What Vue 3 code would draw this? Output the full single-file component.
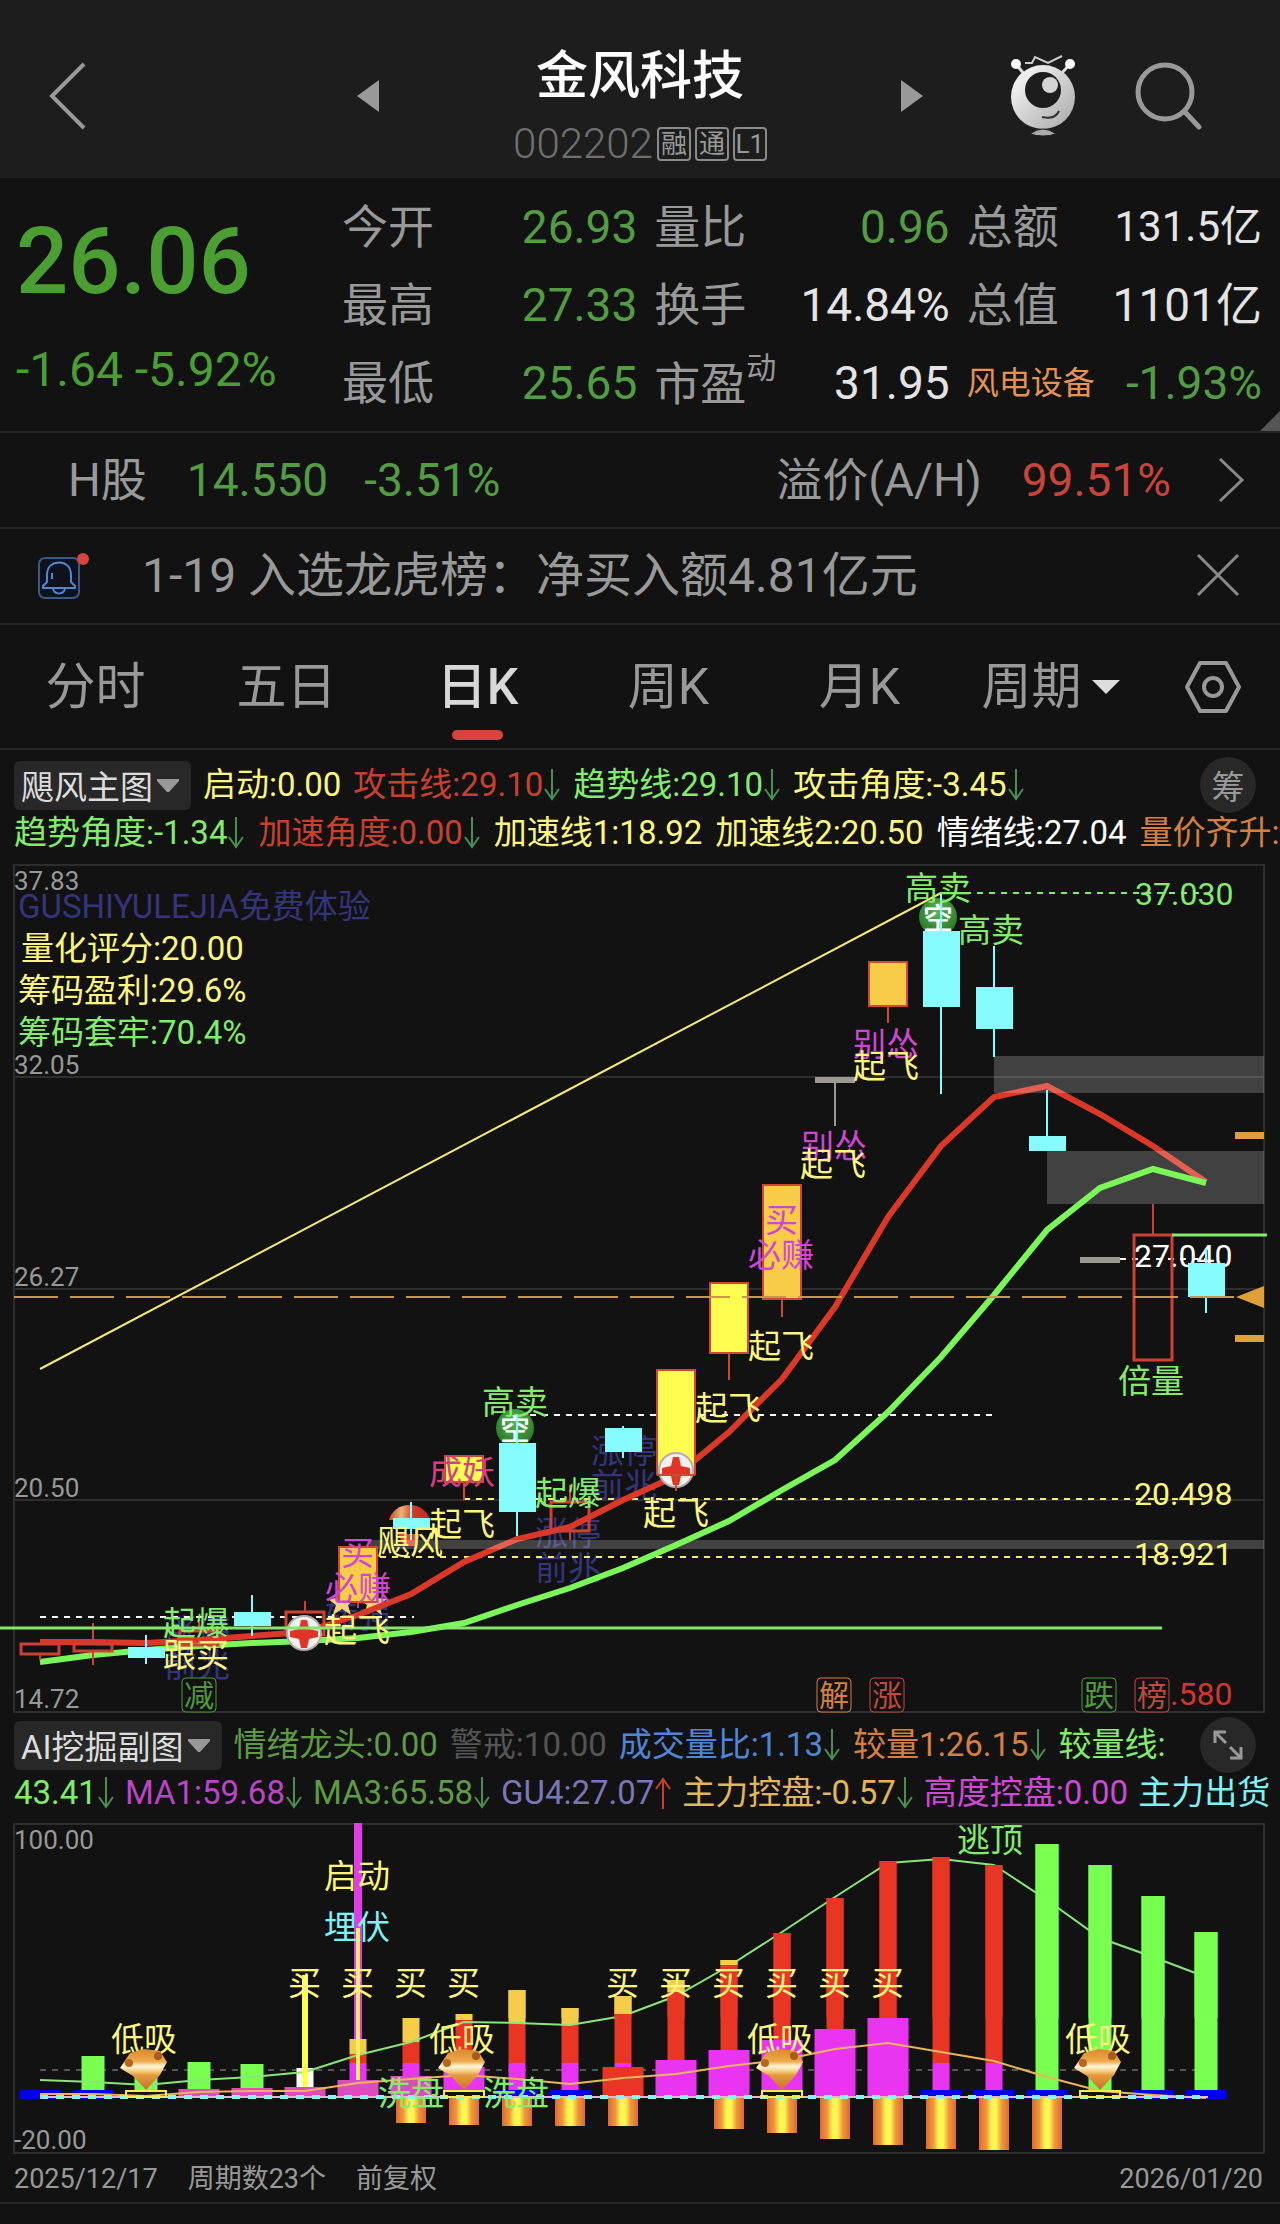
<script setup>
const quotes = [
  { label: '今开', value: '26.93', tone: 'down' },
  { label: '量比', value: '0.96', tone: 'down' },
  { label: '总额', value: '131.5亿', tone: 'plain', small: true },
  { label: '最高', value: '27.33', tone: 'down' },
  { label: '换手', value: '14.84%', tone: 'plain' },
  { label: '总值', value: '1101亿', tone: 'plain' },
  { label: '最低', value: '25.65', tone: 'down' },
  { label: '市盈', sup: '动', value: '31.95', tone: 'plain' },
  { label: '风电设备', sector: true, value: '-1.93%', tone: 'down' },
]
const tabs = ['分时', '五日', '日K', '周K', '月K']

const yellow = '#fdf67e'
const lime = '#84ec6c'
const navy = '#34357c'
const pink = '#d046d4'
const red = '#c9402f'

const mainRow1 = [
  { t: '启动:0.00', c: yellow },
  { t: '攻击线:29.10', c: red, a: 'down' },
  { t: '趋势线:29.10', c: lime, a: 'down' },
  { t: '攻击角度:-3.45', c: yellow, a: 'down' },
]
const mainRow2 = [
  { t: '趋势角度:-1.34', c: lime, a: 'down' },
  { t: '加速角度:0.00', c: red, a: 'down' },
  { t: '加速线1:18.92', c: yellow },
  { t: '加速线2:20.50', c: yellow },
  { t: '情绪线:27.04', c: '#ffffff' },
  { t: '量价齐升:', c: '#d5803f' },
]
const subRow1 = [
  { t: '情绪龙头:0.00', c: '#5f9a45' },
  { t: '警戒:10.00', c: '#555555' },
  { t: '成交量比:1.13', c: '#4f86d6', a: 'down' },
  { t: '较量1:26.15', c: '#d5803f', a: 'down' },
  { t: '较量线:', c: lime },
]
const subRow2 = [
  { t: '43.41', c: lime, a: 'down' },
  { t: 'MA1:59.68', c: '#bb45c6', a: 'down' },
  { t: 'MA3:65.58', c: '#5f9a45', a: 'down' },
  { t: 'GU4:27.07', c: '#7a77b8', a: 'up' },
  { t: '主力控盘:-0.57', c: '#e2b65a', a: 'down' },
  { t: '高度控盘:0.00', c: '#cf48d6' },
  { t: '主力出货', c: '#7df3f7' },
]

const barX = (i) => 40 + i * 53

// i: period, k: kind, t/b: body top and bottom, h/l: wick top and bottom
const candles = [
  { i: 0, k: 'hollow', t: 1644, b: 1654, h: 1643, l: 1660 },
  { i: 1, k: 'hollow', t: 1644, b: 1651, h: 1623, l: 1665 },
  { i: 2, k: 'cyan', t: 1647, b: 1658, h: 1635, l: 1664 },
  { i: 3, k: 'hollow', t: 1631, b: 1645, h: 1618, l: 1645 },
  { i: 4, k: 'cyan', t: 1612, b: 1626, h: 1595, l: 1636 },
  { i: 5, k: 'hollow', t: 1612, b: 1635, h: 1601, l: 1635 },
  { i: 6, k: 'orange', t: 1547, b: 1602, h: 1547, l: 1608 },
  { i: 7, k: 'cyan', t: 1518, b: 1529, h: 1502, l: 1540 },
  { i: 8, k: 'yellow', t: 1456, b: 1482, h: 1456, l: 1500 },
  { i: 9, k: 'cyan', t: 1443, b: 1512, h: 1414, l: 1536 },
  { i: 10, k: 'hollow', t: 1502, b: 1531, h: 1485, l: 1540 },
  { i: 11, k: 'cyan', t: 1428, b: 1452, h: 1426, l: 1458 },
  { i: 12, k: 'yellow', t: 1370, b: 1474, h: 1370, l: 1491 },
  { i: 13, k: 'yellow', t: 1283, b: 1353, h: 1283, l: 1380 },
  { i: 14, k: 'orange', t: 1185, b: 1299, h: 1185, l: 1317 },
  { i: 15, k: 'flat', t: 1078, b: 1082, h: 1082, l: 1126 },
  { i: 16, k: 'orange', t: 962, b: 1006, h: 962, l: 1023 },
  { i: 17, k: 'cyan', t: 931, b: 1007, h: 893, l: 1094 },
  { i: 18, k: 'cyan', t: 987, b: 1029, h: 946, l: 1057 },
  { i: 19, k: 'cyan', t: 1136, b: 1151, h: 1090, l: 1151 },
  { i: 20, k: 'flat', t: 1258, b: 1262, h: 1258, l: 1262 },
  { i: 21, k: 'hollow', t: 1235, b: 1360, h: 1204, l: 1235 },
  { i: 22, k: 'cyan', t: 1263, b: 1297, h: 1248, l: 1313 },
]
const toPoints = (ys) => ys.map((y, i) => `${barX(i)},${y}`).join(' ')
const attackLine = toPoints([1642, 1642, 1643, 1640, 1636, 1632, 1615, 1594, 1562, 1539, 1527, 1500, 1476, 1432, 1379, 1307, 1217, 1146, 1097, 1086, 1114, 1146, 1182])
const trendLine = toPoints([1662, 1655, 1650, 1646, 1643, 1641, 1638, 1632, 1623, 1605, 1588, 1568, 1545, 1521, 1490, 1460, 1412, 1357, 1295, 1230, 1188, 1169, 1183])

const axis = [
  { t: '37.83', y: 890 },
  { t: '32.05', y: 1074 },
  { t: '26.27', y: 1286 },
  { t: '20.50', y: 1497 },
  { t: '14.72', y: 1708 },
]
const backLabels = [
  { t: 'GUSHIYULEJIA免费体验', x: 18, y: 918, c: navy },
  { t: '量化评分:20.00', x: 21, y: 960, c: yellow },
  { t: '筹码盈利:29.6%', x: 18, y: 1002, c: yellow },
  { t: '筹码套牢:70.4%', x: 18, y: 1044, c: lime },
  { t: '涨停', x: 164, y: 1643, c: navy },
  { t: '前兆', x: 164, y: 1677, c: navy },
  { t: '转强', x: 325, y: 1628, c: navy },
  { t: '涨停', x: 535, y: 1545, c: navy },
  { t: '前兆', x: 535, y: 1580, c: navy },
  { t: '涨停', x: 591, y: 1463, c: navy },
  { t: '前兆', x: 591, y: 1497, c: navy },
  { t: '27.040', x: 1134, y: 1267, c: '#ffffff', num: true },
  { t: '37.030', x: 1135, y: 905, c: lime, num: true },
]
const frontLabels = [
  { t: '起爆', x: 163, y: 1635, c: lime },
  { t: '跟买', x: 163, y: 1667, c: yellow },
  { t: '必赚', x: 325, y: 1600, c: pink },
  { t: '买', x: 341, y: 1565, c: pink },
  { t: '起飞', x: 324, y: 1642, c: yellow },
  { t: '飓风', x: 377, y: 1554, c: yellow },
  { t: '起飞', x: 429, y: 1536, c: yellow },
  { t: '成妖', x: 429, y: 1484, c: '#d63f86' },
  { t: '高卖', x: 482, y: 1414, c: lime },
  { t: '起爆', x: 535, y: 1505, c: lime },
  { t: '起飞', x: 643, y: 1525, c: yellow },
  { t: '起飞', x: 695, y: 1420, c: yellow },
  { t: '起飞', x: 748, y: 1358, c: yellow },
  { t: '买', x: 765, y: 1232, c: pink },
  { t: '必赚', x: 748, y: 1267, c: pink },
  { t: '别怂', x: 801, y: 1158, c: pink },
  { t: '起飞', x: 800, y: 1176, c: yellow },
  { t: '别怂', x: 853, y: 1056, c: pink },
  { t: '起飞', x: 853, y: 1078, c: yellow },
  { t: '高卖', x: 905, y: 900, c: lime },
  { t: '高卖', x: 958, y: 942, c: lime },
  { t: '倍量', x: 1118, y: 1393, c: lime },
  { t: '20.498', x: 1134, y: 1505, c: yellow, num: true },
  { t: '18.921', x: 1134, y: 1565, c: yellow, num: true },
  { t: '.580', x: 1170, y: 1705, c: '#d0382c', num: true },
]
const eventTags = [
  { t: '减', x: 182, c: '#4f9a3c' },
  { t: '解', x: 817, c: '#d5803f' },
  { t: '涨', x: 870, c: '#c04a40' },
  { t: '跌', x: 1082, c: '#4f9a3c' },
  { t: '榜', x: 1135, c: '#c04a40' },
]
const plusBalls = [{ x: 304, y: 1633 }, { x: 676, y: 1470 }]
const shortBalls = [{ x: 515, y: 1428 }, { x: 938, y: 917 }]

const gold = '#f6cd4a'
const scarlet = '#e93624'
const magenta = '#e935f2'
const rose = '#dc4cc0'
const green = '#78ff4f'
const blue = '#0000ee'
// i: period, w: width, t/b: top and bottom, c: fill
const columns = [
  { i: 1, w: 23, t: 2056, b: 2090, c: green },
  { i: 2, w: 23, t: 2066, b: 2090, c: green },
  { i: 3, w: 23, t: 2062, b: 2090, c: green },
  { i: 4, w: 23, t: 2064, b: 2090, c: green },
  { i: 5, w: 17, t: 2068, b: 2088, c: '#ffffff' },
  { i: 6, w: 8, t: 1823, b: 2050, c: '#dd3ce6' },
  { i: 6, w: 17, t: 2039, b: 2054, c: gold },
  { i: 6, w: 17, t: 2054, b: 2063, c: scarlet },
  { i: 6, w: 17, t: 2063, b: 2082, c: magenta },
  { i: 7, w: 17, t: 2018, b: 2042, c: gold },
  { i: 7, w: 17, t: 2042, b: 2063, c: scarlet },
  { i: 7, w: 17, t: 2063, b: 2080, c: magenta },
  { i: 8, w: 17, t: 2014, b: 2020, c: gold },
  { i: 8, w: 17, t: 2020, b: 2070, c: scarlet },
  { i: 9, w: 17, t: 1990, b: 2023, c: gold },
  { i: 9, w: 17, t: 2023, b: 2063, c: scarlet },
  { i: 9, w: 17, t: 2063, b: 2090, c: magenta },
  { i: 10, w: 17, t: 2008, b: 2024, c: gold },
  { i: 10, w: 17, t: 2024, b: 2063, c: scarlet },
  { i: 10, w: 17, t: 2063, b: 2090, c: magenta },
  { i: 11, w: 17, t: 1996, b: 2014, c: gold },
  { i: 11, w: 17, t: 2014, b: 2063, c: scarlet },
  { i: 11, w: 17, t: 2063, b: 2068, c: magenta },
  { i: 12, w: 17, t: 1980, b: 1992, c: gold },
  { i: 12, w: 17, t: 1992, b: 2060, c: scarlet },
  { i: 13, w: 17, t: 1960, b: 1965, c: gold },
  { i: 13, w: 17, t: 1965, b: 2052, c: scarlet },
  { i: 14, w: 17, t: 1933, b: 2042, c: scarlet },
  { i: 15, w: 17, t: 1898, b: 2030, c: scarlet },
  { i: 16, w: 17, t: 1861, b: 2020, c: scarlet },
  { i: 17, w: 17, t: 1857, b: 2063, c: scarlet },
  { i: 17, w: 17, t: 2063, b: 2090, c: magenta },
  { i: 18, w: 17, t: 1865, b: 2063, c: scarlet },
  { i: 18, w: 17, t: 2063, b: 2090, c: magenta },
  { i: 19, w: 23, t: 1844, b: 2090, c: green },
  { i: 20, w: 23, t: 1865, b: 2090, c: green },
  { i: 21, w: 23, t: 1896, b: 2090, c: green },
  { i: 22, w: 23, t: 1932, b: 2090, c: green },
  { i: 3, w: 41, t: 2089, b: 2098, c: rose },
  { i: 4, w: 41, t: 2088, b: 2098, c: rose },
  { i: 5, w: 41, t: 2087, b: 2098, c: rose },
  { i: 6, w: 41, t: 2080, b: 2098, c: rose },
  { i: 7, w: 41, t: 2076, b: 2098, c: rose },
  { i: 8, w: 41, t: 2067, b: 2090, c: magenta },
  { i: 11, w: 41, t: 2067, b: 2098, c: scarlet },
  { i: 12, w: 41, t: 2060, b: 2098, c: magenta },
  { i: 13, w: 41, t: 2050, b: 2098, c: magenta },
  { i: 14, w: 41, t: 2040, b: 2090, c: magenta },
  { i: 15, w: 41, t: 2029, b: 2098, c: magenta },
  { i: 16, w: 41, t: 2018, b: 2098, c: magenta },
  ...[0, 1, 9, 10, 17, 18, 19, 21, 22].map((i) => ({ i, w: 41, t: 2090, b: 2099, c: blue })),
]
const tallColumns = columns.filter((c) => c.i > 8 && c.t < 2030)
const washBars = [
  { i: 7, b: 2123 }, { i: 8, b: 2125 }, { i: 9, b: 2126 }, { i: 10, b: 2126 }, { i: 11, b: 2126 },
  { i: 13, b: 2129 }, { i: 14, b: 2133 }, { i: 15, b: 2139 }, { i: 16, b: 2145 },
  { i: 17, b: 2149 }, { i: 18, b: 2150 }, { i: 19, b: 2149 },
]
const strengthLine = toPoints([2080, 2082, 2085, 2080, 2077, 2072, 2055, 2042, 2022, 2023, 2025, 2016, 1996, 1966, 1932, 1897, 1863, 1859, 1865, 1900, 1938, 1957, 1977])
const controlLine = toPoints([2094, 2094, 2096, 2092, 2091, 2091, 2083, 2079, 2075, 2079, 2084, 2078, 2074, 2066, 2060, 2049, 2043, 2052, 2061, 2077, 2091, 2095, 2098])
const buys = [5, 6, 7, 8, 11, 12, 13, 14, 15, 16]
const dips = [2, 8, 14, 20]
</script>

<template>
  <main class="page">
    <header class="top">
      <button class="icon-btn back" aria-label="返回">
        <svg width="40" height="70" viewBox="0 0 40 70"><path d="M36 3 L4 35 L36 67" fill="none" stroke="#999" stroke-width="4" /></svg>
      </button>
      <div class="switcher">
        <button class="icon-btn" aria-label="上一只">
          <svg width="24" height="34" viewBox="0 0 24 34"><path d="M23 1 V33 L1 17Z" fill="#999" /></svg>
        </button>
        <div class="title">
          <h1>金风科技</h1>
          <p><span class="code">002202</span><span class="tag">融</span><span class="tag">通</span><span class="tag">L1</span></p>
        </div>
        <button class="icon-btn" aria-label="下一只">
          <svg width="24" height="34" viewBox="0 0 24 34"><path d="M1 1 V33 L23 17Z" fill="#999" /></svg>
        </button>
      </div>
      <div class="tools">
        <button class="icon-btn" aria-label="助手">
          <svg width="66" height="84" viewBox="0 0 66 84">
            <defs>
              <linearGradient id="bot" x1="0" y1="0" x2="1" y2="1"><stop offset="0" stop-color="#fff" /><stop offset=".6" stop-color="#c9c9c9" /><stop offset="1" stop-color="#a8a8a8" /></linearGradient>
            </defs>
            <path d="M6 10 L14 20 M60 10 L51 20" stroke="#ddd" stroke-width="3" />
            <circle cx="6" cy="10" r="5" fill="#fff" /><circle cx="60" cy="10" r="5" fill="#fff" />
            <path d="M15 9 H22 L25 3 L38 9 L52 2" fill="none" stroke="#ccc" stroke-width="2" />
            <circle cx="33" cy="43" r="32" fill="url(#bot)" />
            <circle cx="33" cy="36" r="18" fill="#1d1d1d" />
            <circle cx="40" cy="31" r="8" fill="#d4d4d4" />
            <path d="M32 63 Q45 66 49 57" fill="none" stroke="#333" stroke-width="2" />
            <path d="M20 80 Q33 70 46 80 Q33 84 20 80Z" fill="#aaa" stroke="#1d1d1d" />
          </svg>
        </button>
        <button class="icon-btn" aria-label="搜索">
          <svg width="68" height="70" viewBox="0 0 68 70"><circle cx="30" cy="31" r="27" fill="none" stroke="#999" stroke-width="5" /><path d="M50 51 L64 66" stroke="#999" stroke-width="5" stroke-linecap="round" /></svg>
        </button>
      </div>
    </header>

    <section class="quote">
      <div class="price">
        <strong>26.06</strong>
        <span>-1.64 -5.92%</span>
      </div>
      <dl class="grid">
        <div v-for="q in quotes" :key="q.label" class="cell">
          <dt :class="{ sector: q.sector }">{{ q.label }}<sup v-if="q.sup">{{ q.sup }}</sup></dt>
          <dd :class="[q.tone, { small: q.small }]">{{ q.value }}</dd>
        </div>
      </dl>
      <i class="corner"></i>
    </section>

    <section class="hshare">
      <span>H股</span><b class="down h-price">14.550</b><b class="down">-3.51%</b>
      <span class="premium">溢价(A/H)</span><b class="up">99.51%</b>
      <svg class="more" width="28" height="46" viewBox="0 0 28 46"><path d="M3 2 L25 23 L3 44" fill="none" stroke="#888" stroke-width="3" /></svg>
    </section>

    <section class="notice">
      <svg width="56" height="50" viewBox="0 0 56 50">
        <rect x="3" y="8" width="40" height="40" rx="6" fill="#0c131c" stroke="#3c5a85" stroke-width="2" />
        <path d="M11 32 V25 C11 16 17 12.500 23 12.500 C29 12.500 35 16 35 25 V32 L39 36 V38 H7 V36Z M17 39 C19 45 27 45 29 39 M16 23 V29" fill="none" stroke="#5387cf" stroke-width="2" stroke-linejoin="round" />
        <circle cx="47" cy="9" r="6" fill="#d8453c" />
      </svg>
      <p>1-19 入选龙虎榜：净买入额4.81亿元</p>
      <button class="icon-btn" aria-label="关闭">
        <svg width="44" height="44" viewBox="0 0 44 44"><path d="M2 2 L42 42 M42 2 L2 42" stroke="#888" stroke-width="3" /></svg>
      </button>
    </section>

    <nav class="tabs">
      <button v-for="t in tabs" :key="t" :class="{ active: t === '日K' }">{{ t }}</button>
      <button class="period">周期<svg width="28" height="14" viewBox="0 0 28 14"><path d="M0 0 H28 L14 14Z" fill="#ddd" /></svg></button>
      <button class="settings" aria-label="设置">
        <svg width="58" height="54" viewBox="0 0 58 54"><path d="M16 3 H42 L55 27 L42 51 H16 L3 27Z" fill="none" stroke="#999" stroke-width="4" stroke-linejoin="round" /><circle cx="29" cy="27" r="9" fill="none" stroke="#999" stroke-width="4" /></svg>
      </button>
    </nav>

    <section class="indicator">
      <div class="row first">
        <button class="picker">飓风主图<svg width="22" height="13" viewBox="0 0 22 13"><path d="M0 0 H22 V2 L12 13 H10 L0 2Z" fill="#999" /></svg></button>
        <span v-for="m in mainRow1" :key="m.t" class="metric" :style="{ color: m.c }">{{ m.t }}<svg v-if="m.a" width="18" height="32" viewBox="0 0 18 32"><path d="M9 0 V30 M2 20 L9 30 L16 20" fill="none" stroke="#4a8f52" stroke-width="2" /></svg></span>
        <button class="round">筹</button>
      </div>
      <div class="row">
        <span v-for="m in mainRow2" :key="m.t" class="metric" :style="{ color: m.c }">{{ m.t }}<svg v-if="m.a" width="18" height="32" viewBox="0 0 18 32"><path d="M9 0 V30 M2 20 L9 30 L16 20" fill="none" stroke="#4a8f52" stroke-width="2" /></svg></span>
      </div>
    </section>

    <svg class="chart" viewBox="0 860 1280 858" role="img" aria-label="日K线主图">
      <defs>
        <radialGradient id="ball" cx=".5" cy=".35" r=".7"><stop offset="0" stop-color="#57b85a" /><stop offset="1" stop-color="#256e1f" /></radialGradient>
        <linearGradient id="fire" x1="0" y1="0" x2="1" y2="0"><stop offset="0" stop-color="#c4452c" /><stop offset=".3" stop-color="#f0b27a" /><stop offset=".6" stop-color="#cf3a28" /><stop offset="1" stop-color="#b8301f" /></linearGradient>
      </defs>
      <g class="frame">
        <rect x="14" y="865" width="1250" height="847" />
        <path d="M14 1077 H1264 M14 1289 H1264 M14 1500 H1264" />
      </g>
      <text v-for="a in axis" :key="a.t" class="axis" x="14" :y="a.y">{{ a.t }}</text>
      <text v-for="(l, n) in backLabels" :key="n" :class="['label', { num: l.num }]" :x="l.x" :y="l.y" :fill="l.c">{{ l.t }}</text>

      <path d="M40 1369 L941 893" stroke="#f4ec72" stroke-width="2" />
      <g stroke-width="2" stroke-dasharray="6 6">
        <path d="M40 1617 H414 M530 1415 H995 M1120 1259 H1206" stroke="#fff" />
        <path d="M464 1499 H1206 M380 1557 H1206" stroke="#f4ec72" />
        <path d="M965 893 H1206" stroke="#84ec6c" />
      </g>

      <path d="M389 1520 A21 19 0 0 1 430 1520Z" fill="url(#fire)" />
      <path d="M398 1534 H420 L416 1546 H404Z" fill="#e2452e" />
      <g v-for="(b, n) in shortBalls" :key="n">
        <circle :cx="b.x" :cy="b.y" r="19" fill="url(#ball)" />
        <text class="short" :x="b.x" :y="b.y + 12">空</text>
      </g>
      <path d="M342 1589 l4 9 10 1 -8 6 3 10 -9 -6 -9 6 3 -10 -8 -6 10 -1Z M373 1589 l4 9 10 1 -8 6 3 10 -9 -6 -9 6 3 -10 -8 -6 10 -1Z" fill="#f5d376" />

      <polyline :points="attackLine" fill="none" stroke="#dc3827" stroke-width="6" />
      <g fill="#fff" fill-opacity=".2">
        <rect x="994" y="1056" width="270" height="37" />
        <rect x="1047" y="1151" width="217" height="53" />
        <rect x="370" y="1540" width="894" height="9" />
      </g>
      <polyline :points="trendLine" fill="none" stroke="#7cf75a" stroke-width="6" />

      <g v-for="c in candles" :key="c.i" :class="['candle', c.k]">
        <path v-if="c.h < c.t" :d="`M${barX(c.i)} ${c.h} V${c.t}`" />
        <path v-if="c.l > c.b" :d="`M${barX(c.i)} ${c.b} V${c.l}`" />
        <rect :x="barX(c.i) - (c.k === 'cyan' ? 18 : 19)" :y="c.t" :width="c.k === 'cyan' ? 37 : 38" :height="c.b - c.t" />
      </g>
      <g v-for="(b, n) in plusBalls" :key="n">
        <circle :cx="b.x" :cy="b.y" r="17" fill="#f4f0ee" stroke="#b5aeac" stroke-width="2" />
        <path :d="`M${b.x - 3} ${b.y - 13} h6 l2 9 9 2 v6 l-9 2 -2 9 h-6 l-2 -9 -9 -2 v-6 l9 -2Z`" fill="#e03426" />
      </g>
      <path d="M657 1475 H695 M676 1475 V1491" stroke="#d2472f" stroke-width="2" />
      <path d="M0 1628 H1162" stroke="#86e66c" stroke-width="3" />
      <path d="M1172 1235 H1267" stroke="#84ec6c" stroke-width="3" />
      <path d="M14 1297 H1264" stroke="#c8964c" stroke-width="2" stroke-dasharray="44 12" />
      <g fill="#dfa03a">
        <rect x="1235" y="1132" width="29" height="7" />
        <rect x="1235" y="1335" width="29" height="7" />
        <path d="M1236 1297 L1264 1286 V1308Z" />
      </g>

      <text v-for="(l, n) in frontLabels" :key="n" :class="['label', { num: l.num }]" :x="l.x" :y="l.y" :fill="l.c">{{ l.t }}</text>
      <g v-for="e in eventTags" :key="e.t">
        <rect :x="e.x" y="1678" width="34" height="34" rx="4" fill="#121212" :stroke="e.c" />
        <text class="event" :x="e.x + 17" y="1706" :fill="e.c">{{ e.t }}</text>
      </g>
    </svg>

    <section class="indicator sub">
      <div class="row first">
        <button class="picker">AI挖掘副图<svg width="22" height="13" viewBox="0 0 22 13"><path d="M0 0 H22 V2 L12 13 H10 L0 2Z" fill="#999" /></svg></button>
        <span v-for="m in subRow1" :key="m.t" class="metric" :style="{ color: m.c }">{{ m.t }}<svg v-if="m.a" width="18" height="32" viewBox="0 0 18 32"><path d="M9 0 V30 M2 20 L9 30 L16 20" fill="none" stroke="#4a8f52" stroke-width="2" /></svg></span>
        <button class="round" aria-label="全屏">
          <svg width="32" height="32" viewBox="0 0 32 32"><path d="M14 14 L4 4 M3 14 V3 H14 M18 18 L28 28 M29 18 V29 H18" fill="none" stroke="#999" stroke-width="3" /></svg>
        </button>
      </div>
      <div class="row tight">
        <span v-for="m in subRow2" :key="m.t" class="metric" :style="{ color: m.c }">{{ m.t }}<svg v-if="m.a" width="18" height="32" viewBox="0 0 18 32"><path v-if="m.a === 'down'" d="M9 0 V30 M2 20 L9 30 L16 20" fill="none" stroke="#4a8f52" stroke-width="2" /><path v-else d="M9 32 V2 M2 12 L9 2 L16 12" fill="none" stroke="#c9402f" stroke-width="2" /></svg></span>
      </div>
    </section>

    <svg class="chart" viewBox="0 1820 1280 336" role="img" aria-label="AI挖掘副图">
      <defs>
        <linearGradient id="wash" x1="0" y1="0" x2="1" y2="0">
          <stop offset="0" stop-color="#dd6a30" /><stop offset=".25" stop-color="#ef9a3c" /><stop offset=".42" stop-color="#fdf650" />
          <stop offset=".58" stop-color="#fdf650" /><stop offset=".75" stop-color="#ef9a3c" /><stop offset="1" stop-color="#dd6a30" />
        </linearGradient>
        <linearGradient id="gem" x1="0" y1="0" x2="0" y2="1">
          <stop offset="0" stop-color="#d98a2b" /><stop offset=".3" stop-color="#eda94c" /><stop offset=".42" stop-color="#fff6d8" />
          <stop offset=".52" stop-color="#f8d893" /><stop offset=".64" stop-color="#e59a3c" /><stop offset="1" stop-color="#c8702a" />
        </linearGradient>
      </defs>
      <rect class="frame" x="14" y="1824" width="1250" height="329" />
      <text class="axis" x="14" y="1849">100.00</text>
      <text class="axis" x="14" y="2149">-20.00</text>
      <path d="M40 2070 H1206" stroke="#555" stroke-width="2" stroke-dasharray="6 6" />
      <rect v-for="(c, n) in columns" :key="n" :x="barX(c.i) - c.w / 2" :y="c.t" :width="c.w" :height="c.b - c.t" :fill="c.c" />
      <rect v-for="w in washBars" :key="w.i" :x="barX(w.i) - 15" y="2098" width="30" :height="w.b - 2098" fill="url(#wash)" />
      <polyline :points="strengthLine" fill="none" stroke="#8ae678" stroke-width="2" />
      <rect v-for="c in tallColumns" :key="`${c.i}-${c.t}`" :x="barX(c.i) - c.w / 2" :y="c.t" :width="c.w" :height="Math.min(c.b, 2018) - c.t" :fill="c.c" />
      <polyline :points="controlLine" fill="none" stroke="#eab55c" stroke-width="2" />
      <path d="M305 1975 V2087" stroke="#ffff50" stroke-width="6" />
      <path d="M358 1928 V2080" stroke="#ffef60" stroke-width="4" />
      <path d="M40 2097 H1208" stroke="#f0b4cc" stroke-width="2" />
      <path d="M40 2097 H1208" stroke="#86f6f8" stroke-width="4" stroke-dasharray="8 8" />
      <text class="label" x="324" y="1888" :fill="yellow">启动</text>
      <text class="label" x="324" y="1939" fill="#7df3f7">埋伏</text>
      <text class="label" x="957" y="1852" :fill="lime">逃顶</text>
      <text v-for="i in buys" :key="i" class="label" :x="barX(i) - 17" y="1995" :fill="yellow">买</text>
      <g v-for="i in dips" :key="i">
        <rect :x="barX(i) - 20" y="2091" width="40" height="6" fill="none" stroke="#f4ec50" stroke-width="2" />
        <text class="label" :x="barX(i) - 35" y="2051" :fill="yellow">低吸</text>
        <path :d="`M${barX(i) - 16} 2053 L${barX(i) - 2} 2049 L${barX(i) + 14} 2051 L${barX(i) + 21} 2062 L${barX(i) + 14} 2075 L${barX(i)} 2090 L${barX(i) - 13} 2076 L${barX(i) - 26} 2068Z`" fill="url(#gem)" />
        <circle :cx="barX(i) + 12" cy="2056" r="4" fill="#a65c1c" />
        <circle :cx="barX(i) - 17" cy="2063" r="4" fill="#b4661f" />
      </g>
      <text class="label" x="378" y="2105" :fill="lime">洗盘</text>
      <text class="label" x="483" y="2105" :fill="lime">洗盘</text>
    </svg>

    <footer class="foot">
      <span>2025/12/17</span><span>周期数23个</span><span>前复权</span><span class="end">2026/01/20</span>
    </footer>
  </main>
</template>

<style>
body {
  margin: 0;
  background: #121212;
}
</style>

<style scoped>
.page {
  min-height: 100vh;
  font-family: Roboto, "Noto Sans CJK SC", sans-serif;
  color: #999;
  background: #121212;
  overflow: hidden;
}
button {
  font: inherit;
  color: inherit;
  background: none;
  border: 0;
  padding: 0;
}
svg {
  display: block;
  flex: none;
}
h1, p, dl, dd {
  margin: 0;
}
b {
  font-weight: 400;
}
.down {
  color: #549c42;
}
.up {
  color: #cb4339;
}
.plain {
  color: #e4e4e4;
}

.top {
  display: grid;
  grid-template-columns: 1fr 568px 1fr;
  align-items: center;
  height: 164px;
  padding-top: 14px;
  background: #1d1d1d;
}
.back {
  margin-left: 48px;
  justify-self: start;
}
.switcher {
  display: flex;
  align-items: center;
  justify-content: space-between;
}
.title {
  padding-top: 22px;
  text-align: center;
}
.title h1 {
  font-size: 52px;
  line-height: 60px;
  font-weight: 500;
  color: #fff;
}
.title p {
  display: flex;
  align-items: center;
  gap: 4px;
  margin-top: 14px;
  line-height: 46px;
}
.code {
  font-size: 42px;
  font-weight: 300;
  color: #707070;
}
.tag {
  box-sizing: border-box;
  width: 34px;
  height: 34px;
  border: 2px solid #8a8a8a;
  border-radius: 4px;
  font-size: 26px;
  line-height: 30px;
  display: flex;
  justify-content: center;
}
.tools {
  display: flex;
  align-items: center;
  justify-content: flex-end;
  gap: 59px;
  padding-right: 77px;
}

.quote {
  position: relative;
  display: flex;
  box-sizing: border-box;
  height: 255px;
  padding: 10px 18px 0 16px;
  border-bottom: 2px solid #242424;
}
.price {
  flex: 0 0 326px;
  color: #4b9f32;
}
.price strong {
  display: block;
  margin-top: 24px;
  font-size: 92px;
  line-height: 100px;
  font-weight: 500;
}
.price span {
  display: block;
  margin-top: 28px;
  font-size: 48px;
  line-height: 60px;
}
.grid {
  flex: 1;
  display: grid;
  grid-template-columns: repeat(3, 1fr);
  grid-auto-rows: 78px;
  column-gap: 17px;
}
.cell {
  display: flex;
  justify-content: space-between;
  align-items: center;
  font-size: 46px;
  line-height: 60px;
  white-space: nowrap;
}
.cell sup {
  font-size: 30px;
  line-height: 30px;
  vertical-align: 22px;
}
.cell .sector {
  font-size: 32px;
  color: #e39450;
}
.small {
  font-size: 42px;
}
.corner {
  position: absolute;
  right: 0;
  bottom: 0;
  border-style: solid;
  border-width: 0 0 20px 20px;
  border-color: transparent transparent #555;
}

.hshare,
.notice {
  display: flex;
  align-items: center;
  box-sizing: border-box;
  height: 96px;
  border-bottom: 2px solid #242424;
  font-size: 46px;
  line-height: 60px;
}
.hshare {
  padding: 0 35px 0 68px;
}
.h-price {
  margin: 0 36px 0 40px;
}
.premium {
  margin: 0 40px 0 auto;
}
.more {
  margin-left: 46px;
}
.notice {
  padding: 0 40px 0 36px;
}
.notice svg {
  margin-bottom: 2px;
}
.notice p {
  margin-left: 50px;
  font-size: 48px;
}
.notice .icon-btn {
  margin-left: auto;
}

.tabs {
  display: flex;
  box-sizing: border-box;
  height: 125px;
  border-bottom: 2px solid #242424;
  font-size: 50px;
  line-height: 60px;
}
.tabs button {
  position: relative;
  flex: 191;
  white-space: nowrap;
}
.tabs .active {
  color: #d8d8d8;
  font-weight: 500;
}
.tabs .active::after {
  content: "";
  position: absolute;
  left: 50%;
  bottom: 8px;
  width: 51px;
  height: 10px;
  margin-left: -26px;
  border-radius: 5px;
  background: #d8453c;
}
.tabs .period,
.tabs .settings {
  display: flex;
  align-items: center;
  justify-content: center;
  gap: 10px;
}
.tabs .settings {
  flex: 134;
}

.indicator {
  padding: 10px 0 4px 14px;
  font-size: 33px;
}
.sub {
  padding-top: 2px;
}
.row {
  display: flex;
  align-items: center;
  gap: 13px;
  height: 46px;
  white-space: nowrap;
}
.first {
  gap: 12px;
  height: 50px;
  padding-right: 24px;
}
.tight {
  gap: 10px;
}
.picker {
  display: flex;
  align-items: center;
  gap: 4px;
  height: 49px;
  padding: 0 12px 0 7px;
  border-radius: 6px;
  background: #282828;
  color: #ddd;
}
.metric {
  display: flex;
  align-items: center;
  line-height: 46px;
}
.round {
  display: flex;
  align-items: center;
  justify-content: center;
  width: 56px;
  height: 56px;
  margin: -3px 0 -3px auto;
  border-radius: 50%;
  background: #282828;
  flex: none;
}

.chart {
  width: 100%;
  height: auto;
}
.frame {
  fill: none;
  stroke: #2e2e2e;
  stroke-width: 2;
}
.axis {
  font-size: 26px;
  fill: #999;
}
.label {
  font-size: 33px;
}
.num {
  font-size: 32px;
}
.event {
  font-size: 30px;
  text-anchor: middle;
}
.short {
  font-size: 30px;
  font-weight: 500;
  fill: #fff;
  text-anchor: middle;
}
.candle {
  stroke-width: 2;
}
.hollow {
  fill: none;
  stroke: #cf4034;
}
.hollow rect {
  stroke-width: 3;
}
.cyan {
  fill: #86fcfe;
  stroke: #86fcfe;
}
.cyan rect {
  stroke: none;
}
.yellow {
  fill: #fffd50;
  stroke: #d2472f;
}
.orange {
  fill: #f8cb48;
  stroke: #d2472f;
}
.flat {
  fill: #9a9a90;
  stroke: #9a9a90;
}

.foot {
  display: flex;
  align-items: center;
  gap: 30px;
  height: 46px;
  padding: 0 17px 0 14px;
  border-bottom: 2px solid #242424;
  font-size: 27px;
  line-height: 30px;
}
.end {
  margin-left: auto;
}
</style>
